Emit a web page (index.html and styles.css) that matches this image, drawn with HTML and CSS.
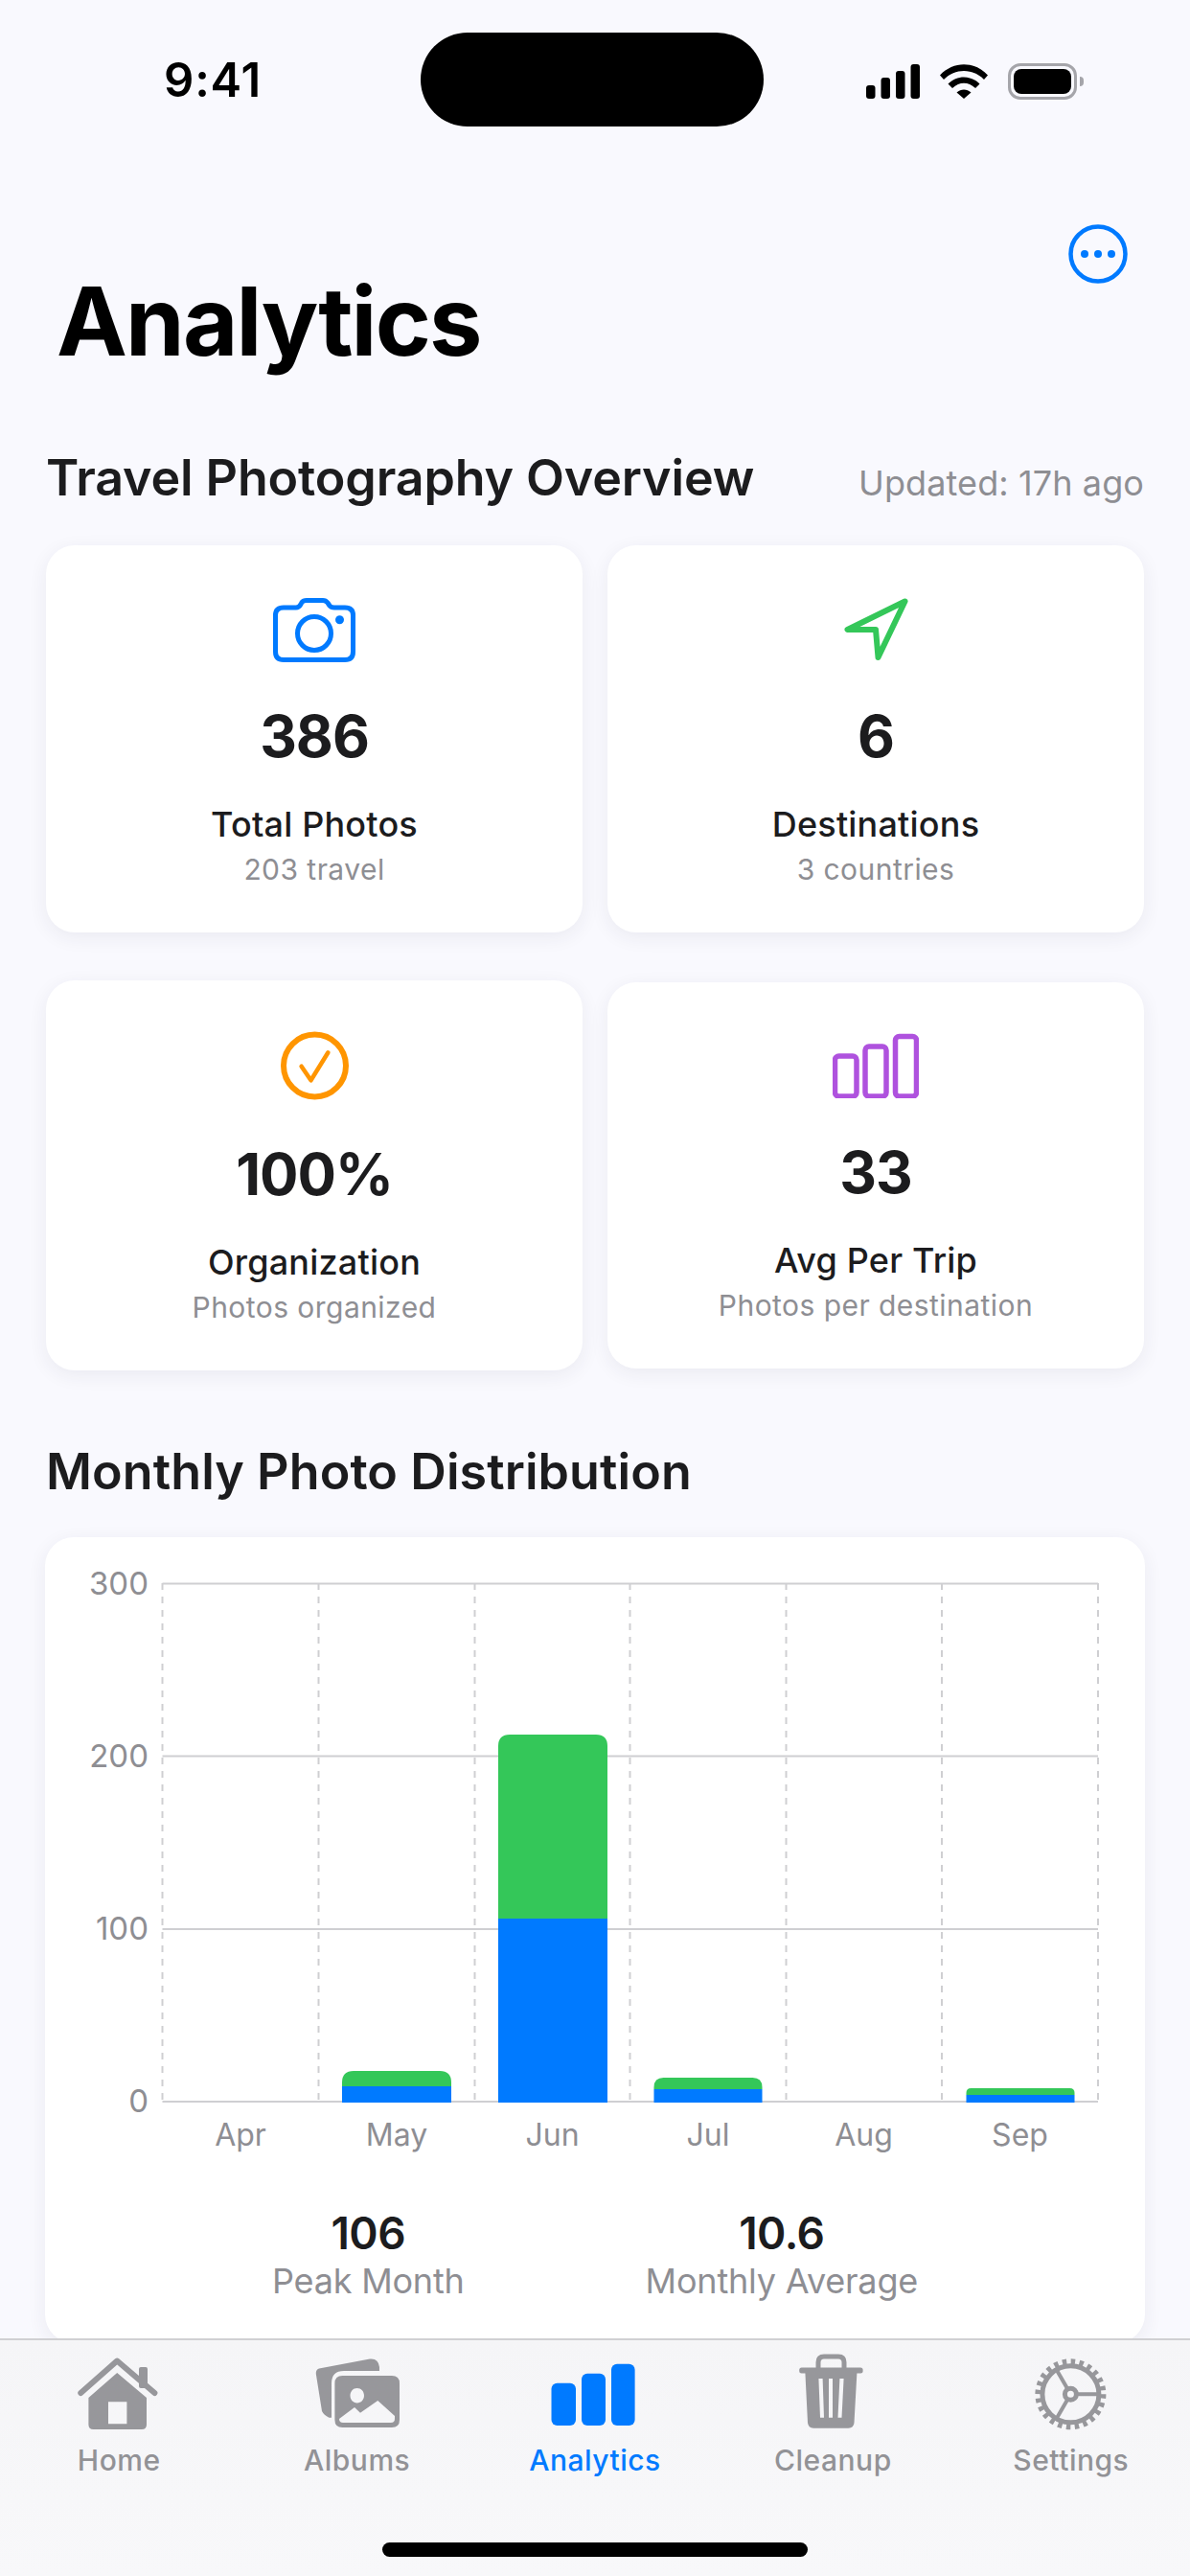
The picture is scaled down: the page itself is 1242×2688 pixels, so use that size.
FILE: index.html
```html
<!DOCTYPE html>
<html lang="en">
<head>
<meta charset="utf-8">
<title>Analytics</title>
<link rel="stylesheet" href="styles.css">
</head>
<body>
<div class="phone">
  <div class="island"></div>
  <header class="status">
    <span class="time">9:41</span>
    <div class="status-icons">
      <svg class="signal" viewBox="0 0 56 36"><rect x="0" y="22" width="9.5" height="14" rx="3"/><rect x="15.500" y="14" width="9.500" height="22" rx="3"/><rect x="31" y="7" width="9.500" height="29" rx="3"/><rect x="46.500" y="0" width="9.500" height="36" rx="3"/></svg>
      <svg class="wifi" viewBox="0 0 50 36"><path d="M0 11.500C14 -3.500 36 -3.500 50 11.500L46 16C34 4 16 4 4 16Z"/><path d="M8.500 20.500C18 11 32 11 41.500 20.500L37 25C29.500 18 20.500 18 13 25Z"/><path d="M17.500 29.500C22 25.500 28 25.500 32.500 29.500L25 36Z"/></svg>
      <div class="battery"><div class="battery-shell"><div class="battery-level"></div></div><div class="battery-nub"></div></div>
    </div>
  </header>
  <main class="content">
    <div class="more-row">
      <svg class="more" viewBox="0 0 62 62"><circle class="more-ring" cx="31" cy="31" r="28.500"/><circle class="more-dot" cx="17" cy="31" r="4"/><circle class="more-dot" cx="31" cy="31" r="4"/><circle class="more-dot" cx="45" cy="31" r="4"/></svg>
    </div>
    <h1 class="page-title">Analytics</h1>
    <div class="section-head">
      <h2 class="section-title">Travel Photography Overview</h2>
      <span class="updated">Updated: 17h ago</span>
    </div>
    <section class="stat-grid">
      <article class="stat-card">
        <svg class="ico ico-camera" viewBox="0 -2 86 69"><path d="M11 10H24Q27 10 29 6.500L30 4.500Q31.500 2.500 35 2.500H52Q55 2.500 57 5L59 8Q60.500 10 64 10H75Q83.500 10 83.500 18V56Q83.500 64.500 75 64.500H11Q2.500 64.500 2.500 56V18Q2.500 10 11 10Z"/><circle cx="43" cy="37" r="17.500"/><circle class="fill-blue" cx="69.500" cy="22.700" r="4.500"/></svg>
        <div class="stat-value">386</div>
        <div class="stat-label">Total Photos</div>
        <div class="stat-sub">203 travel</div>
      </article>
      <article class="stat-card">
        <svg class="ico ico-nav" viewBox="0 -2 67 69"><path d="M63.500 3.500L3.500 33H33L35.500 62Z"/></svg>
        <div class="stat-value">6</div>
        <div class="stat-label">Destinations</div>
        <div class="stat-sub">3 countries</div>
      </article>
      <article class="stat-card">
        <svg class="ico ico-check" viewBox="0 0 71 72"><circle cx="35.500" cy="36" r="32.500"/><path class="thin" d="M21.600 36.700L31.500 51.300L49.400 22.300"/></svg>
        <div class="stat-value">100%</div>
        <div class="stat-label">Organization</div>
        <div class="stat-sub">Photos organized</div>
      </article>
      <article class="stat-card">
        <svg class="ico ico-bars" viewBox="0 -1 90 68"><rect x="2.500" y="23" width="22.500" height="42" rx="4"/><rect x="34" y="13" width="22" height="52" rx="4"/><rect x="65.500" y="2.500" width="22" height="62.500" rx="4"/></svg>
        <div class="stat-value">33</div>
        <div class="stat-label">Avg Per Trip</div>
        <div class="stat-sub">Photos per destination</div>
      </article>
    </section>
    <h2 class="section-title section-title-spaced">Monthly Photo Distribution</h2>
    <section class="chart-card">
      <svg class="chart" viewBox="0 0 1147 650">
        <g class="grid-h">
          <line x1="122.500" y1="48.500" x2="1099" y2="48.500"/>
          <line x1="122.500" y1="228.500" x2="1099" y2="228.500"/>
          <line x1="122.500" y1="409" x2="1099" y2="409"/>
          <line x1="122.500" y1="589" x2="1099" y2="589"/>
        </g>
        <g class="grid-v">
          <line x1="122.500" y1="48" x2="122.500" y2="589"/>
          <line x1="285.500" y1="48" x2="285.500" y2="589"/>
          <line x1="448.500" y1="48" x2="448.500" y2="589"/>
          <line x1="610.500" y1="48" x2="610.500" y2="589"/>
          <line x1="773.500" y1="48" x2="773.500" y2="589"/>
          <line x1="936" y1="48" x2="936" y2="589"/>
          <line x1="1099" y1="48" x2="1099" y2="589"/>
        </g>
        <g class="bar-green">
          <path d="M310 573V569Q310 557 322 557H412Q424 557 424 569V573Z"/>
          <path d="M473 398V218Q473 206 485 206H575Q587 206 587 218V398Z"/>
          <path d="M635.500 576V574Q635.500 564 645.500 564H738.500Q748.500 564 748.500 574V576Z"/>
          <path d="M961.500 582V580Q961.500 575 966.500 575H1069.500Q1074.500 575 1074.500 580V582Z"/>
        </g>
        <g class="bar-blue">
          <rect x="310" y="573" width="114" height="17"/>
          <rect x="473" y="398" width="114" height="192"/>
          <rect x="635.500" y="576" width="113" height="14"/>
          <rect x="961.500" y="582" width="113" height="8"/>
        </g>
        <g class="axis-y">
          <text x="108" y="60">300</text>
          <text x="108" y="240">200</text>
          <text x="108" y="420">100</text>
          <text x="108" y="600">0</text>
        </g>
        <g class="axis-x">
          <text x="204" y="635">Apr</text>
          <text x="367" y="635">May</text>
          <text x="529.500" y="635">Jun</text>
          <text x="692" y="635">Jul</text>
          <text x="854.500" y="635">Aug</text>
          <text x="1017.500" y="635">Sep</text>
        </g>
      </svg>
      <div class="chart-stats">
        <div class="chart-stat"><div class="chart-stat-value">106</div><div class="chart-stat-label">Peak Month</div></div>
        <div class="chart-stat"><div class="chart-stat-value">10.6</div><div class="chart-stat-label">Monthly Average</div></div>
      </div>
    </section>
  </main>
  <nav class="tabbar">
    <div class="tabs">
      <div class="tab">
        <svg class="tab-ico" viewBox="0 0 100 80"><rect x="71" y="14" width="9" height="22" rx="2"/><path class="roof" d="M10.300 41L48.200 7.500L87.400 41"/><path fill-rule="evenodd" d="M18.400 46L48.200 20L79 46V74Q79 79 74 79H23.400Q18.400 79 18.400 74ZM39 50.300V73.300H58.400V50.300Z"/></svg>
        <span class="tab-label">Home</span>
      </div>
      <div class="tab">
        <svg class="tab-ico" viewBox="0 0 100 80"><path d="M10 15.500L63 5.500Q72 4.500 73 14V18H36Q23 18 23 31V66.700H20.400Q15 64 13 60L6.800 21Q6.500 16.500 10 15.500Z"/><path fill-rule="evenodd" d="M34.400 23H86Q94 23 94 31V69Q94 77 86 77H34.400Q26.400 77 26.400 69V31Q26.400 23 34.400 23ZM49.700 36C45.500 36 42.500 39.500 42.500 43.700S45.500 51.400 49.700 51.400S57 48 57 43.700S53.900 36 49.700 36ZM71.300 49L53 61.700L47 56L31 68Q31 72 35 72H85Q89 72 89 68V65Z"/></svg>
        <span class="tab-label">Albums</span>
      </div>
      <div class="tab tab-active">
        <svg class="tab-ico" viewBox="0 0 100 80"><rect x="4.500" y="30.700" width="25.500" height="44.300" rx="6"/><rect x="36" y="20.700" width="25" height="54.300" rx="6"/><rect x="67" y="10.700" width="24.600" height="64.300" rx="6"/></svg>
        <span class="tab-label">Analytics</span>
      </div>
      <div class="tab">
        <svg class="tab-ico" viewBox="0 0 100 80"><path class="handle" d="M35 15V9Q35 3 41 3H56Q62 3 62 9V15"/><rect x="15.200" y="14.500" width="66.400" height="6" rx="2.500"/><path fill-rule="evenodd" d="M21.400 20H75.400L72.500 72Q72 77.700 66.500 77.700H30Q24.500 77.700 24 72ZM35.400 26L37 66.700H41L39.600 26ZM46 26V66.700H50V26ZM57.400 26L55.500 66.700H59.500L61.600 26Z"/></svg>
        <span class="tab-label">Cleanup</span>
      </div>
      <div class="tab">
        <svg class="tab-ico gear" viewBox="0 0 100 80"><circle class="gear-teeth" cx="49.400" cy="42.300" r="33"/><circle class="gear-ring" cx="49.400" cy="42.300" r="29.500"/><path class="gear-spoke" d="M49.400 42.300H81M49.400 42.300L33.500 14.800M49.400 42.300L33.500 69.800"/><circle class="gear-hub" cx="49.400" cy="42.300" r="6"/></svg>
        <span class="tab-label">Settings</span>
      </div>
    </div>
    <div class="home-indicator"></div>
  </nav>
</div>
</body>
</html>
```
FILE: styles.css
```css
* { box-sizing: border-box; margin: 0; padding: 0; }
html, body { width: 1242px; height: 2688px; overflow: hidden; }
body { font-family: Inter, "Liberation Sans", sans-serif; background: #f9f9fe; color: #1c1c1e; }

.phone { position: relative; width: 1242px; height: 2688px; overflow: hidden; background: #f9f9fe; }

.island { position: absolute; left: 439px; top: 34px; width: 358px; height: 98px; border-radius: 49px; background: #000; }

.status { height: 167px; display: flex; align-items: center; justify-content: space-between; padding: 0 111px 0 171px; }
.time { font-size: 49px; font-weight: 600; color: #000; line-height: 56px; letter-spacing: 0.8px; }
.status-icons { display: flex; align-items: center; margin-top: 3px; }
.signal { width: 56px; height: 36px; fill: #000; margin-right: 21px; }
.wifi { width: 50px; height: 36px; fill: #000; margin-right: 21px; }
.battery { display: flex; align-items: center; gap: 3px; }
.battery-shell { width: 72px; height: 38px; border: 3px solid #a5a5aa; border-radius: 13px; padding: 3px; }
.battery-level { height: 100%; background: #000; border-radius: 8px; }
.battery-nub { width: 4px; height: 10px; background: #a5a5aa; border-radius: 0 4px 4px 0; }

.content { padding: 0 48px; }
.more-row { display: flex; justify-content: flex-end; padding: 67px 17px 0 0; }
.more { width: 62px; height: 62px; display: block; }
.more-ring { fill: none; stroke: #007aff; stroke-width: 4.5; }
.more-dot { fill: #007aff; }

.page-title { font-size: 99px; font-weight: 700; line-height: 78px; letter-spacing: -1.8px; color: #000; padding-left: 11px; }

.section-head { display: flex; justify-content: space-between; align-items: baseline; margin-top: 95px; }
.section-title { font-size: 52px; font-weight: 600; line-height: 60px; letter-spacing: -0.15px; color: #1c1c1e; }
.section-title-spaced { margin-top: 76px; letter-spacing: 0.08px; }
.updated { font-size: 36px; line-height: 44px; color: #8e8e93; letter-spacing: 0.1px; }

.stat-grid { display: grid; grid-template-columns: 560px 560px; column-gap: 26px; row-gap: 50px; align-items: center; margin-top: 40px; }
.stat-card { display: flex; flex-direction: column; align-items: center; padding: 53px 0 48px; background: #fff; border-radius: 30px; box-shadow: 0 5px 20px rgba(40, 40, 70, 0.07); }

.ico { display: block; fill: none; stroke-linejoin: round; stroke-linecap: round; }
.ico-camera { width: 86px; height: 69px; stroke: #007aff; stroke-width: 5; }
.fill-blue { fill: #007aff; stroke: none; }
.ico-nav { width: 67px; height: 69px; stroke: #34c759; stroke-width: 6; }
.ico-check { width: 71px; height: 72px; stroke: #ff9500; stroke-width: 6; }
.ico-check .thin { stroke-width: 4.5; }
.ico-bars { width: 90px; height: 68px; stroke: #af52de; stroke-width: 5.5; }

.stat-value { font-size: 60px; font-weight: 700; line-height: 72px; letter-spacing: -1px; margin-top: 41px; color: #1c1c1e; }
.stat-label { font-size: 36px; font-weight: 500; line-height: 44px; margin-top: 34px; color: #1c1c1e; letter-spacing: 0.2px; }
.stat-sub { font-size: 30px; line-height: 36px; margin-top: 7px; color: #8e8e93; letter-spacing: 0.45px; }

.chart-card { margin: 38px -1px 0; padding-bottom: 43px; background: #fff; border-radius: 30px; box-shadow: 0 5px 20px rgba(40, 40, 70, 0.07); }
.chart { display: block; width: 1147px; height: 650px; }
.grid-h line { stroke: #cfcfd2; stroke-width: 2; }
.grid-v line { stroke: #cfcfd2; stroke-width: 2; stroke-dasharray: 7 7; }
.bar-green { fill: #34c759; }
.bar-blue { fill: #007aff; }
.axis-y text { font-family: Inter, "Liberation Sans", sans-serif; font-size: 33px; fill: #8e8e93; text-anchor: end; }
.axis-x text { font-family: Inter, "Liberation Sans", sans-serif; font-size: 32px; fill: #8e8e93; text-anchor: middle; }

.chart-stats { display: flex; justify-content: center; gap: 189px; margin-top: 48px; }
.chart-stat { display: flex; flex-direction: column; align-items: center; }
.chart-stat-value { font-size: 46px; font-weight: 600; line-height: 56px; color: #1c1c1e; letter-spacing: -0.5px; }
.chart-stat-label { font-size: 36px; line-height: 44px; color: #8e8e93; letter-spacing: -0.2px; }

.tabbar { position: absolute; left: 0; right: 0; bottom: 0; height: 248px; padding-top: 14px; background: linear-gradient(180deg, #f5f5f7, #f8f8fa); border-top: 2px solid #d0d0d3; }
.tabs { display: grid; grid-template-columns: repeat(5, 1fr); }
.tab { display: flex; flex-direction: column; align-items: center; color: #8e8e93; }
.tab-ico { display: block; width: 100px; height: 80px; fill: #97979b; }
.tab-label { font-size: 30px; font-weight: 500; line-height: 36px; margin-top: 13px; color: #929296; letter-spacing: 0.5px; }
.tab-active .tab-ico { fill: #007aff; }
.tab-active .tab-label { color: #007aff; }
.roof { fill: none; stroke: #97979b; stroke-width: 6; stroke-linecap: round; stroke-linejoin: round; }
.handle { fill: none; stroke: #97979b; stroke-width: 5; }
.gear-teeth { fill: none; stroke: #97979b; stroke-width: 8; stroke-dasharray: 4.32 4.32; }
.gear-ring { fill: none; stroke: #97979b; stroke-width: 5; }
.gear-spoke { fill: none; stroke: #97979b; stroke-width: 4; }
.gear-hub { fill: #f7f7f9; stroke: #97979b; stroke-width: 5; }
.home-indicator { width: 444px; height: 15px; margin: 68px auto 0; background: #000; border-radius: 8px; }
```
